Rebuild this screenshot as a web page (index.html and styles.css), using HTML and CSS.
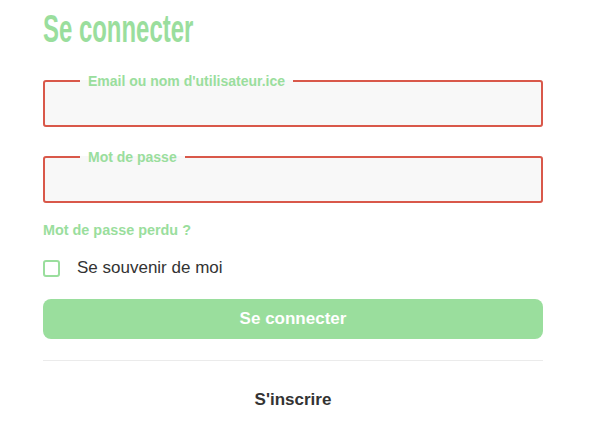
FILE: index.html
```html
<!DOCTYPE html>
<html lang="fr">
<head>
<meta charset="utf-8">
<link rel="stylesheet" href="styles.css">
</head>
<body>
<main class="login">
  <h1 class="title"><span class="title-text">Se connecter</span></h1>
  <fieldset class="field field-email">
    <legend class="legend">Email ou nom d'utilisateur.ice</legend>
    <input class="input" type="text">
  </fieldset>
  <fieldset class="field field-pass">
    <legend class="legend">Mot de passe</legend>
    <input class="input" type="password">
  </fieldset>
  <a class="lost" href="#">Mot de passe perdu ?</a>
  <label class="remember"><span class="check"></span><span>Se souvenir de moi</span></label>
  <button class="submit">Se connecter</button>
  <hr class="divider">
  <a class="signup" href="#">S'inscrire</a>
</main>
</body>
</html>
```
FILE: styles.css
```css
html, body { margin: 0; padding: 0; background: #fff; }
body { font-family: "Liberation Sans", Arial, sans-serif; }
.login { width: 500px; margin-left: 43px; display: flex; flex-direction: column; }
.title {
  font-family: "Liberation Sans", Arial, sans-serif;
  font-weight: bold; font-size: 38px; color: #9ade9d; margin: 9px 0 0 0; line-height: 40px;
}
.title-text { display: inline-block; transform: scaleX(0.63); transform-origin: left center; }
.field {
  margin: 0; padding: 0; border: 2px solid #d9584a; border-radius: 3px;
  background: #f8f8f8; height: 54px; box-sizing: border-box; min-width: 0;
}
.field-email { margin-top: 24px; }
.field-pass { margin-top: 22px; }
.legend {
  font-size: 14px; font-weight: bold; color: #9ade9d; padding: 0 8px; margin-left: 35px;
  line-height: 16px;
}
.input { border: none; background: transparent; width: 100%; height: 30px; outline: none; }
.lost { font-size: 14.4px; font-weight: bold; color: #9ade9d; text-decoration: none; margin-top: 19px; line-height: 16px; }
.remember { display: flex; align-items: center; gap: 17px; margin-top: 20px; font-size: 17px; color: #333; line-height: 20px; }
.check { width: 13px; height: 13px; border: 2px solid #9ade9d; border-radius: 3px; display: block; }
.submit {
  margin-top: 21px; height: 40px; border: none; border-radius: 8px; background: #9ade9d; color: #fff;
  font-family: "Liberation Sans", Arial, sans-serif; font-weight: bold; font-size: 17px;
}
.divider { border: none; border-top: 1px solid #ebebeb; margin: 21px 0 0; }
.signup { align-self: center; margin-top: 29px; font-size: 17px; line-height: 20px; font-weight: bold; color: #333; text-decoration: none; }
```
